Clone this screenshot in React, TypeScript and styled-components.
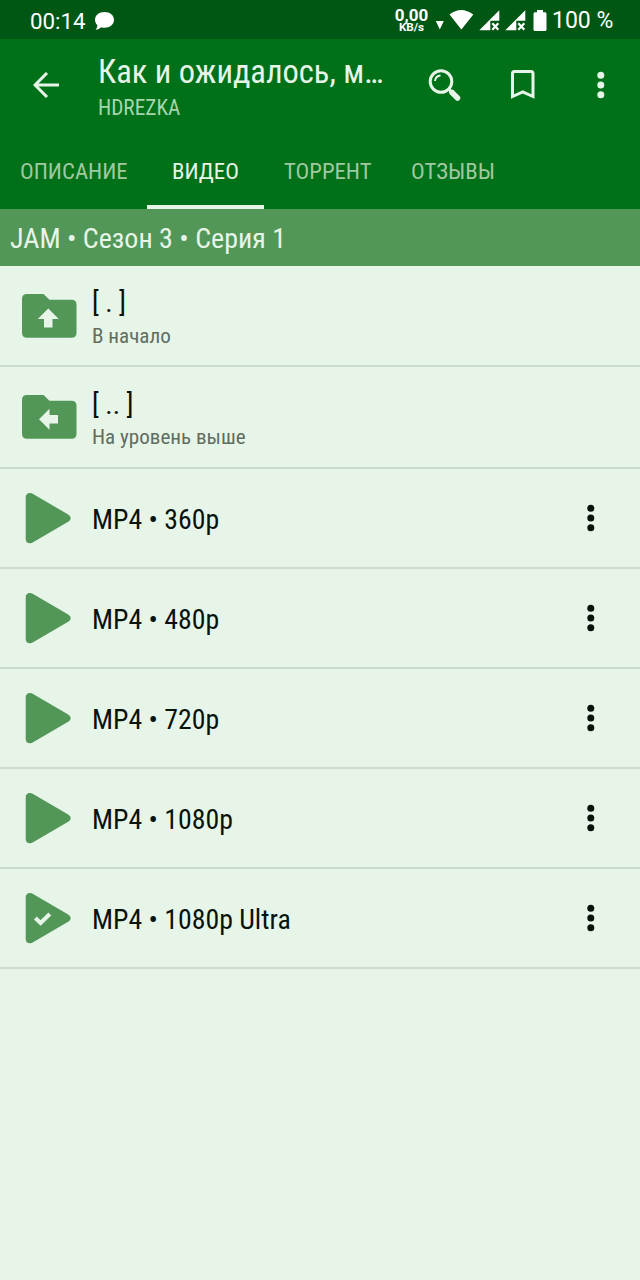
import React from "react";
import styled, { createGlobalStyle } from "styled-components";

const Global = createGlobalStyle`
  * { box-sizing: border-box; }
  body { margin: 0; background: #e7f5e9; font-family: "Roboto Condensed", Roboto, sans-serif; }
`;

const Screen = styled.main`
  width: 640px;
  height: 1280px;
  background: #e7f5e9;
  overflow: hidden;
`;

const Label = styled.span<{ $size: number; $color: string; $top?: number }>`
  display: block;
  width: max-content;
  margin-top: ${(p) => p.$top ?? 0}px;
  white-space: pre;
  font-size: ${(p) => p.$size}px;
  line-height: 1.2;
  font-stretch: 75%;
  color: ${(p) => p.$color};
`;

const StatusBar = styled.header`
  display: flex;
  align-items: center;
  height: 39px;
  padding: 2px 0 0 30px;
  background: #005713;
  color: #fff;
  font-family: Roboto, sans-serif;
`;
const Clock = styled.span`
  width: 64px;
  padding-top: 1px;
  font-size: 22.3px;
  line-height: 30px;
`;
const Speed = styled.span`
  display: flex;
  flex-direction: column;
  align-items: center;
  width: 35px;
  margin-left: 279px;
  margin-right: 6px;
  font-weight: 700;
`;
const SpeedValue = styled.span`
  font-size: 17px;
  line-height: 13px;
`;
const SpeedUnit = styled.span`
  font-size: 11.7px;
  line-height: 10px;
`;
const StatusIcon = styled.svg<{ $after: number }>`
  flex: none;
  margin-right: ${(p) => p.$after}px;
`;
const Battery = styled.span`
  padding-top: 1px;
  font-size: 23px;
  line-height: 30px;
`;

const AppBar = styled.div`
  display: flex;
  height: 93px;
  background: #007019;
`;
const Back = styled.div`
  width: 98px;
  padding: 33px 0 0 33px;
`;
const Titles = styled.div`
  width: 328px;
  padding-top: 14px;
`;
const Actions = styled.div`
  display: flex;
  padding-top: 27px;
`;
const Overflow = styled.div`
  padding-top: 3px;
`;

const Tabs = styled.nav`
  display: flex;
  height: 77px;
  background: #007019;
`;
const Tab = styled.div<{ $width: number; $active?: boolean }>`
  width: ${(p) => p.$width}px;
  padding: 26px 0 0 ${(p) => (p.$active ? 25 : 20)}px;
  border-bottom: 4px solid ${(p) => (p.$active ? "#e7f5e9" : "transparent")};
`;

const PathBar = styled.div`
  height: 57px;
  padding: 13px 0 0 10px;
  background: #529758;
`;

const Row = styled.div<{ $height: number }>`
  display: flex;
  align-items: center;
  height: ${(p) => p.$height}px;
  border-bottom: 2px solid #cbdccd;
`;
const RowIcon = styled.div`
  display: flex;
  width: 92px;
  padding-left: 21px;
`;
const RowText = styled.div`
  flex: 1;
  padding-top: 3px;
`;
const RowMenu = styled.div`
  display: flex;
  width: 62px;
`;

const Dots = ({ color }: { color: string }) => (
  <svg width="26" height="32" viewBox="0 0 26 32" fill={color}>
    <circle cx="12.800" cy="6.200" r="3.500" />
    <circle cx="12.800" cy="16" r="3.500" />
    <circle cx="12.800" cy="25.800" r="3.500" />
  </svg>
);

const Folder = ({ up }: { up?: boolean }) => (
  <svg width="56" height="46" viewBox="0 0 56 46">
    <path d="M6 1H22.500L28.500 6.800H50.500Q55.500 6.800 55.500 11.800V39.700Q55.500 44.700 50.500 44.700H6Q1 44.700 1 39.700V6Q1 1 6 1Z" fill="#529758" />
    <path
      d="M27.300 15.500L37.800 26H31.500V34.500H23V26H16.800Z"
      fill="#e7f5e9"
      transform={up ? undefined : "rotate(-90 27.500 25)"}
    />
  </svg>
);

const Play = ({ checked }: { checked?: boolean }) => (
  <svg width="52" height="52" viewBox="0 0 52 52">
    <path d="M4.700 5.500Q4.700 1 9 1Q10.500 1 12.500 2.200L47.200 22.500Q49.700 24 49.700 26.200Q49.700 28.200 47.200 29.700L12.500 50Q10.500 51.200 9 51.200Q4.700 51.200 4.700 46.700Z" fill="#529758" />
    {checked && <path d="M14.300 26L19.600 31L28.800 22" fill="none" stroke="#e7f5e9" strokeWidth="4" />}
  </svg>
);

const Signal = ({ after }: { after: number }) => (
  <StatusIcon $after={after} width="21" height="22" viewBox="0 0 21 22">
    <path d="M20.300 .2V10.800H11.300V20.200H.3Z" fill="#fff" />
    <path d="M13.300 13.200L19.300 19.700M19.300 13.200L13.300 19.700" stroke="#fff" strokeWidth="2.200" />
  </StatusIcon>
);

const tabs = [
  { title: "ОПИСАНИЕ", width: 147 },
  { title: "ВИДЕО", width: 117, active: true },
  { title: "ТОРРЕНТ", width: 127 },
  { title: "ОТЗЫВЫ", width: 124 },
];
const folders = [
  { name: "[ . ]", note: "В начало", up: true, height: 101 },
  { name: "[ .. ]", note: "На уровень выше", up: false, height: 102 },
];
const videos = ["MP4 • 360p", "MP4 • 480p", "MP4 • 720p", "MP4 • 1080p", "MP4 • 1080p Ultra"];

export default function App() {
  return (
    <Screen>
      <Global />
      <StatusBar>
        <Clock>00:14</Clock>
        <StatusIcon $after={0} width="21" height="20" viewBox="0 0 21 20" fill="#fff">
          <path d="M10.500 1C16 1 20 4.200 20 8.800S16 16.800 10.500 16.800C9.300 16.800 8.200 16.700 7.200 16.300C5.500 18 3.800 18.700 1.500 18.800C2.800 17.300 3.400 15.800 3.300 14.200C1.900 12.800 1 11 1 8.800C1 4.200 5 1 10.500 1Z" />
        </StatusIcon>
        <Speed>
          <SpeedValue>0,00</SpeedValue>
          <SpeedUnit>KB/s</SpeedUnit>
        </Speed>
        <StatusIcon $after={5} width="39" height="24" viewBox="0 0 39 24" fill="#fff">
          <path d="M.8 12H8.800L4.800 20.500ZM14.500 5.500Q26 -3.500 38.300 5.500L26.400 20.500Z" />
        </StatusIcon>
        <Signal after={5} />
        <Signal after={7} />
        <StatusIcon $after={5} width="14" height="22" viewBox="0 0 14 22" fill="#fff">
          <path d="M4 0H10V2.200H12Q13.500 2.200 13.500 3.700V19.500Q13.500 21 12 21H2Q.5 21 .5 19.500V3.700Q.5 2.200 2 2.200H4Z" />
        </StatusIcon>
        <Battery>100 %</Battery>
      </StatusBar>
      <AppBar>
        <Back>
          <svg width="28" height="26" viewBox="0 0 28 26" fill="none" stroke="#e7f5e9" strokeWidth="3">
            <path d="M26 13H2M14 1L2 13L14 25" />
          </svg>
        </Back>
        <Titles>
          <Label $size={32.5} $color="#e7f5e9">Как и ожидалось, м…</Label>
          <Label $size={21.3} $color="#a6d6ab" $top={3}>HDREZKA</Label>
        </Titles>
        <Actions>
          <svg width="80" height="38" viewBox="0 0 80 38" fill="none" stroke="#e7f5e9">
            <circle cx="15" cy="15.500" r="10.800" strokeWidth="3" />
            <path d="M9 15Q9.500 10 14.500 9.500" strokeWidth="1.800" />
            <path d="M22.500 23L25 25.500" strokeWidth="3" />
            <path d="M26 26.500L31.500 32" strokeWidth="5.500" strokeLinecap="round" />
          </svg>
          <svg width="82" height="38" viewBox="0 0 82 38" fill="none" stroke="#e7f5e9" strokeWidth="3">
            <path d="M6.500 30.500V7.500Q6.500 5.500 8.500 5.500H25Q27 5.500 27 7.500V30.500L16.700 26Z" />
          </svg>
          <Overflow><Dots color="#e7f5e9" /></Overflow>
        </Actions>
      </AppBar>
      <Tabs>
        {tabs.map((t) => (
          <Tab key={t.title} $width={t.width} $active={t.active}>
            <Label $size={22.8} $color={t.active ? "#e7f5e9" : "#a0c9a0"}>{t.title}</Label>
          </Tab>
        ))}
      </Tabs>
      <PathBar><Label $size={28} $color="#e7f5e9">JAM • Сезон 3 • Серия 1</Label></PathBar>
      {folders.map((f) => (
        <Row key={f.name} $height={f.height}>
          <RowIcon><Folder up={f.up} /></RowIcon>
          <RowText>
            <Label $size={27.8} $color="#07120a">{f.name}</Label>
            <Label $size={21.1} $color="#5f6e61" $top={3}>{f.note}</Label>
          </RowText>
        </Row>
      ))}
      {videos.map((name, i) => (
        <Row key={name} $height={100}>
          <RowIcon><Play checked={i === videos.length - 1} /></RowIcon>
          <RowText><Label $size={27.8} $color="#07120a">{name}</Label></RowText>
          <RowMenu><Dots color="#07120a" /></RowMenu>
        </Row>
      ))}
    </Screen>
  );
}
